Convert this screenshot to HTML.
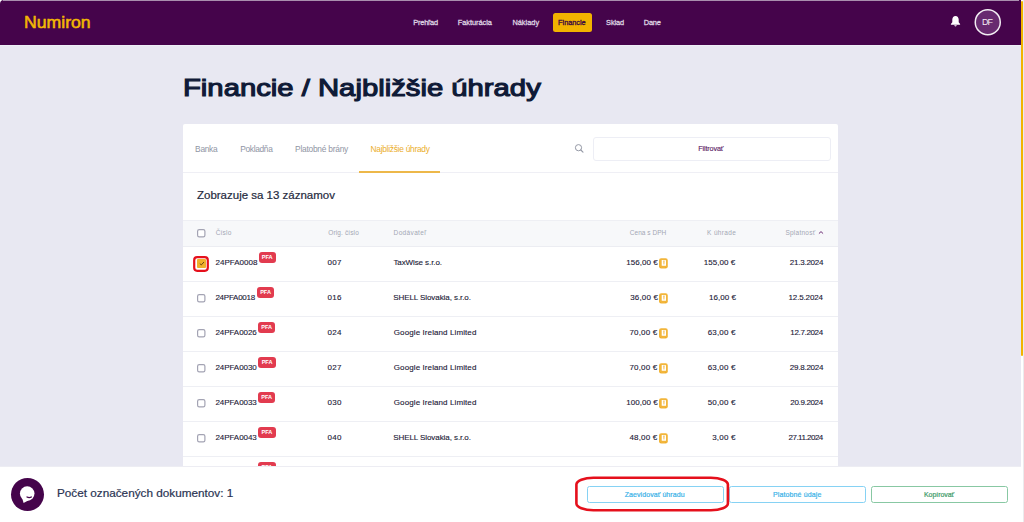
<!DOCTYPE html>
<html><head><meta charset="utf-8"><style>
html,body{margin:0;padding:0;width:1024px;height:522px;overflow:hidden;font-family:"Liberation Sans", sans-serif;}
body{position:relative;}
</style></head><body>
<div style="position:absolute;left:0.00px;top:0.00px;width:1024.00px;height:522.00px;background:#E8E8F2;"></div>
<div style="position:absolute;left:0.00px;top:0.00px;width:6.00px;height:6.00px;background:#FFFFFF;"></div>
<div style="position:absolute;left:1018.00px;top:0.00px;width:6.00px;height:6.00px;background:#F4F5F9;"></div>
<div style="position:absolute;left:0.00px;top:0.00px;width:1020.70px;height:44.50px;background:#45044B;border-top-left-radius:4px;"></div>
<div style="position:absolute;left:3.00px;top:0.00px;width:1016.00px;height:1.00px;background:#A98FAE;"></div>
<div style="position:absolute;left:0.00px;top:44.50px;width:1020.70px;height:1.30px;background:#EDEFF7;"></div>
<div style="position:absolute;left:24.10px;top:14.58px;font-size:16.80px;line-height:16.80px;color:#F2B704;font-weight:400;letter-spacing:0.000px;white-space:nowrap;-webkit-text-stroke:0.55px #F2B704;transform:scaleX(1.0512);transform-origin:0 0;">Numiron</div>
<div style="position:absolute;left:413.30px;top:19.23px;font-size:7.40px;line-height:7.40px;color:#DED2E1;font-weight:400;letter-spacing:-0.200px;white-space:nowrap;-webkit-text-stroke:0.3px #DED2E1;">Prehľad</div>
<div style="position:absolute;left:457.80px;top:19.23px;font-size:7.40px;line-height:7.40px;color:#DED2E1;font-weight:400;letter-spacing:-0.044px;white-space:nowrap;-webkit-text-stroke:0.3px #DED2E1;">Fakturácia</div>
<div style="position:absolute;left:512.40px;top:19.23px;font-size:7.40px;line-height:7.40px;color:#DED2E1;font-weight:400;letter-spacing:0.000px;white-space:nowrap;-webkit-text-stroke:0.3px #DED2E1;">Náklady</div>
<div style="position:absolute;left:606.10px;top:19.23px;font-size:7.40px;line-height:7.40px;color:#DED2E1;font-weight:400;letter-spacing:-0.100px;white-space:nowrap;-webkit-text-stroke:0.3px #DED2E1;">Sklad</div>
<div style="position:absolute;left:643.70px;top:19.23px;font-size:7.40px;line-height:7.40px;color:#DED2E1;font-weight:400;letter-spacing:-0.133px;white-space:nowrap;-webkit-text-stroke:0.3px #DED2E1;">Dane</div>
<div style="position:absolute;left:552.90px;top:13.10px;width:39.30px;height:18.60px;background:#F2B300;border-radius:2.5px;"></div>
<div style="position:absolute;left:558.10px;top:19.23px;font-size:7.40px;line-height:7.40px;color:#3A0840;font-weight:400;letter-spacing:-0.057px;white-space:nowrap;-webkit-text-stroke:0.3px #3A0840;">Financie</div>
<svg style="position:absolute;left:949.5px;top:15.3px" width="11" height="12" viewBox="0 0 11 12"><path d="M5.5 0.9c1.9 0 3.2 1.5 3.2 3.6v2.8l1.4 1.6v0.8H0.9V8.9l1.4-1.6V4.5c0-2.1 1.3-3.6 3.2-3.6z" fill="#fff"/><path d="M4.3 10.2h2.4c0 0.7-0.5 1.2-1.2 1.2s-1.2-0.5-1.2-1.2z" fill="#fff"/></svg>
<svg style="position:absolute;left:973px;top:7px" width="30" height="30" viewBox="0 0 30 30"><circle cx="14.76" cy="15.2" r="12.5" fill="#682B70" stroke="#F2EEF3" stroke-width="1.5"/></svg>
<div style="position:absolute;left:687.08px;width:600px;text-align:center;top:17.96px;font-size:8.90px;line-height:8.90px;color:#F4EEF5;font-weight:400;letter-spacing:-0.800px;white-space:nowrap;">DF</div>
<div style="position:absolute;left:1020.70px;top:0.00px;width:2.10px;height:522.00px;background:#FFFFFF;"></div>
<div style="position:absolute;left:1022.80px;top:0.00px;width:1.20px;height:522.00px;background:#EBEBED;"></div>
<div style="position:absolute;left:1020.70px;top:1.00px;width:2.40px;height:354.80px;background:#F2B300;border-radius:1.2px 1.2px 1.2px 1.2px;"></div>
<div style="position:absolute;left:182.50px;top:76.26px;font-size:24.50px;line-height:24.50px;color:#0F1A37;font-weight:400;letter-spacing:0.000px;white-space:nowrap;-webkit-text-stroke:1.15px #0F1A37;transform:scaleX(1.1942);transform-origin:0 0;">Financie / Najbližšie úhrady</div>
<div style="position:absolute;left:183.00px;top:123.60px;width:654.50px;height:398.40px;background:#FFFFFF;border-radius:2px;"></div>
<div style="position:absolute;left:195.10px;top:145.29px;font-size:8.40px;line-height:8.40px;color:#9095A4;font-weight:400;letter-spacing:-0.300px;white-space:nowrap;">Banka</div>
<div style="position:absolute;left:240.30px;top:145.29px;font-size:8.40px;line-height:8.40px;color:#9095A4;font-weight:400;letter-spacing:-0.343px;white-space:nowrap;">Pokladňa</div>
<div style="position:absolute;left:295.10px;top:145.29px;font-size:8.40px;line-height:8.40px;color:#9095A4;font-weight:400;letter-spacing:-0.246px;white-space:nowrap;">Platobné brány</div>
<div style="position:absolute;left:370.50px;top:145.29px;font-size:8.40px;line-height:8.40px;color:#EBAE2C;font-weight:400;letter-spacing:-0.275px;white-space:nowrap;">Najbližšie úhrady</div>
<div style="position:absolute;left:183.00px;top:172.00px;width:654.50px;height:1.00px;background:#EFEFF5;"></div>
<div style="position:absolute;left:359.10px;top:171.00px;width:80.90px;height:2.00px;background:#EDB84A;"></div>
<svg style="position:absolute;left:573.5px;top:143px" width="11" height="11" viewBox="0 0 11 11"><circle cx="4.5" cy="4.7" r="3.1" fill="none" stroke="#9498A5" stroke-width="1.0"/><path d="M6.8 7.0L9.0 9.2" stroke="#9498A5" stroke-width="1.1" stroke-linecap="round"/></svg>
<div style="position:absolute;left:593.2px;top:137.1px;width:235.4px;height:22px;border:1px solid #EDEEF5;border-radius:3px;background:#fff;"></div>
<div style="position:absolute;left:698.25px;top:144.72px;font-size:7.30px;line-height:7.30px;color:#5A2064;font-weight:400;letter-spacing:-0.175px;white-space:nowrap;-webkit-text-stroke:0.12px #5A2064;">Filtrovať</div>
<div style="position:absolute;left:196.80px;top:189.69px;font-size:11.00px;line-height:11.00px;color:#252A40;font-weight:400;letter-spacing:0.000px;white-space:nowrap;-webkit-text-stroke:0.2px #252A40;transform:scaleX(1.0443);transform-origin:0 0;">Zobrazuje sa 13 záznamov</div>
<div style="position:absolute;left:183.00px;top:219.80px;width:654.50px;height:27.10px;background:#F7F8FA;border-top:1px solid #EEEFF4;border-bottom:1px solid #ECEDF2;box-sizing:border-box;"></div>
<svg style="position:absolute;left:196.00px;top:228.10px" width="11" height="11" viewBox="0 0 11 11"><rect x="1.6" y="1.6" width="7.30" height="7.30" rx="1.6" fill="#fff" stroke="#A3A3B3" stroke-width="1.2"/></svg>
<div style="position:absolute;left:215.70px;top:229.90px;font-size:6.50px;line-height:6.50px;color:#A3A7B4;font-weight:400;letter-spacing:0.200px;white-space:nowrap;">Číslo</div>
<div style="position:absolute;left:328.30px;top:229.90px;font-size:6.50px;line-height:6.50px;color:#A3A7B4;font-weight:400;letter-spacing:0.120px;white-space:nowrap;">Orig. číslo</div>
<div style="position:absolute;left:393.60px;top:229.90px;font-size:6.50px;line-height:6.50px;color:#A3A7B4;font-weight:400;letter-spacing:0.350px;white-space:nowrap;">Dodávateľ</div>
<div style="position:absolute;right:357.70px;top:229.90px;font-size:6.50px;line-height:6.50px;color:#A3A7B4;font-weight:400;letter-spacing:0.044px;white-space:nowrap;">Cena s DPH</div>
<div style="position:absolute;right:287.80px;top:229.90px;font-size:6.50px;line-height:6.50px;color:#A3A7B4;font-weight:400;letter-spacing:0.343px;white-space:nowrap;">K úhrade</div>
<div style="position:absolute;right:208.60px;top:229.90px;font-size:6.50px;line-height:6.50px;color:#A3A7B4;font-weight:400;letter-spacing:0.250px;white-space:nowrap;">Splatnosť</div>
<svg style="position:absolute;left:818px;top:229.5px" width="6" height="5" viewBox="0 0 6 5"><path d="M1.2 3.3L3 1.6 4.8 3.3" fill="none" stroke="#6B2C73" stroke-width="1.0" stroke-linecap="round" stroke-linejoin="round"/></svg>
<div style="position:absolute;left:183.00px;top:280.90px;width:654.50px;height:1.00px;background:#EEEFF4;"></div>
<svg style="position:absolute;left:192px;top:254.80px" width="18" height="18" viewBox="0 0 18 18"><rect x="2.2" y="2.2" width="13.6" height="13.6" rx="3" fill="#fff" stroke="#E5101C" stroke-width="2.2"/></svg>
<div style="position:absolute;left:196.8px;top:258.70px;width:8.8px;height:9.3px;background:#F0B12B;border-radius:1px;"></div>
<svg style="position:absolute;left:198.5px;top:260.90px" width="6" height="5" viewBox="0 0 6 5"><path d="M0.8 2.6L2.3 3.9 5 1" fill="none" stroke="#5A3B10" stroke-width="0.9"/></svg>
<div style="position:absolute;left:215.60px;top:259.13px;font-size:8.00px;line-height:8.00px;color:#1C2037;font-weight:400;letter-spacing:0.000px;white-space:nowrap;-webkit-text-stroke:0.12px #1C2037;">24PFA0008</div>
<div style="position:absolute;left:258.50px;top:252.30px;width:17.4px;height:11px;background:#E23B4F;border-radius:3px;color:#fff;font-size:5.6px;line-height:11px;text-align:center;font-weight:700;">PFA</div>
<div style="position:absolute;left:327.40px;top:259.13px;font-size:8.00px;line-height:8.00px;color:#1C2037;font-weight:400;letter-spacing:0.400px;white-space:nowrap;-webkit-text-stroke:0.12px #1C2037;">007</div>
<div style="position:absolute;left:393.40px;top:259.13px;font-size:8.00px;line-height:8.00px;color:#1C2037;font-weight:400;letter-spacing:-0.092px;white-space:nowrap;-webkit-text-stroke:0.12px #1C2037;">TaxWise s.r.o.</div>
<div style="position:absolute;right:366.20px;top:259.13px;font-size:8.00px;line-height:8.00px;color:#1C2037;font-weight:400;letter-spacing:0.057px;white-space:nowrap;-webkit-text-stroke:0.12px #1C2037;">156,00 €</div>
<svg style="position:absolute;left:658.8px;top:257.90px" width="9" height="11" viewBox="0 0 9 11"><rect x="0" y="0.2" width="8.8" height="10.3" rx="2.2" fill="#F2B53A"/><rect x="2.7" y="2.0" width="4.3" height="5.8" rx="0.4" fill="#FFFFFF"/><path d="M4.35 2.6h1.2l-0.25 4.0h-0.7z" fill="#EFAE2A"/><rect x="1.3" y="8.9" width="0.8" height="0.8" rx="0.4" fill="#E59E10"/><rect x="6.0" y="8.9" width="0.8" height="0.8" rx="0.4" fill="#E59E10"/></svg>
<div style="position:absolute;right:288.70px;top:259.13px;font-size:8.00px;line-height:8.00px;color:#1C2037;font-weight:400;letter-spacing:0.057px;white-space:nowrap;-webkit-text-stroke:0.12px #1C2037;">155,00 €</div>
<div style="position:absolute;right:200.80px;top:259.13px;font-size:8.00px;line-height:8.00px;color:#1C2037;font-weight:400;letter-spacing:-0.250px;white-space:nowrap;-webkit-text-stroke:0.12px #1C2037;">21.3.2024</div>
<div style="position:absolute;left:183.00px;top:315.90px;width:654.50px;height:1.00px;background:#EEEFF4;"></div>
<svg style="position:absolute;left:195.90px;top:293.00px" width="11" height="11" viewBox="0 0 11 11"><rect x="1.6" y="1.6" width="7.30" height="7.30" rx="1.6" fill="#fff" stroke="#A3A3B3" stroke-width="1.2"/></svg>
<div style="position:absolute;left:215.40px;top:294.13px;font-size:8.00px;line-height:8.00px;color:#1C2037;font-weight:400;letter-spacing:-0.250px;white-space:nowrap;-webkit-text-stroke:0.12px #1C2037;">24PFA0018</div>
<div style="position:absolute;left:256.90px;top:287.30px;width:17.4px;height:11px;background:#E23B4F;border-radius:3px;color:#fff;font-size:5.6px;line-height:11px;text-align:center;font-weight:700;">PFA</div>
<div style="position:absolute;left:327.40px;top:294.13px;font-size:8.00px;line-height:8.00px;color:#1C2037;font-weight:400;letter-spacing:0.400px;white-space:nowrap;-webkit-text-stroke:0.12px #1C2037;">016</div>
<div style="position:absolute;left:393.20px;top:294.13px;font-size:8.00px;line-height:8.00px;color:#1C2037;font-weight:400;letter-spacing:-0.073px;white-space:nowrap;-webkit-text-stroke:0.12px #1C2037;">SHELL Slovakia, s.r.o.</div>
<div style="position:absolute;right:365.80px;top:294.13px;font-size:8.00px;line-height:8.00px;color:#1C2037;font-weight:400;letter-spacing:0.190px;white-space:nowrap;-webkit-text-stroke:0.12px #1C2037;">36,00 €</div>
<svg style="position:absolute;left:658.8px;top:292.90px" width="9" height="11" viewBox="0 0 9 11"><rect x="0" y="0.2" width="8.8" height="10.3" rx="2.2" fill="#F2B53A"/><rect x="2.7" y="2.0" width="4.3" height="5.8" rx="0.4" fill="#FFFFFF"/><path d="M4.35 2.6h1.2l-0.25 4.0h-0.7z" fill="#EFAE2A"/><rect x="1.3" y="8.9" width="0.8" height="0.8" rx="0.4" fill="#E59E10"/><rect x="6.0" y="8.9" width="0.8" height="0.8" rx="0.4" fill="#E59E10"/></svg>
<div style="position:absolute;right:287.90px;top:294.13px;font-size:8.00px;line-height:8.00px;color:#1C2037;font-weight:400;letter-spacing:0.057px;white-space:nowrap;-webkit-text-stroke:0.12px #1C2037;">16,00 €</div>
<div style="position:absolute;right:201.20px;top:294.13px;font-size:8.00px;line-height:8.00px;color:#1C2037;font-weight:400;letter-spacing:-0.150px;white-space:nowrap;-webkit-text-stroke:0.12px #1C2037;">12.5.2024</div>
<div style="position:absolute;left:183.00px;top:350.90px;width:654.50px;height:1.00px;background:#EEEFF4;"></div>
<svg style="position:absolute;left:195.90px;top:328.00px" width="11" height="11" viewBox="0 0 11 11"><rect x="1.6" y="1.6" width="7.30" height="7.30" rx="1.6" fill="#fff" stroke="#A3A3B3" stroke-width="1.2"/></svg>
<div style="position:absolute;left:215.40px;top:329.13px;font-size:8.00px;line-height:8.00px;color:#1C2037;font-weight:400;letter-spacing:-0.050px;white-space:nowrap;-webkit-text-stroke:0.12px #1C2037;">24PFA0026</div>
<div style="position:absolute;left:258.00px;top:322.30px;width:17.4px;height:11px;background:#E23B4F;border-radius:3px;color:#fff;font-size:5.6px;line-height:11px;text-align:center;font-weight:700;">PFA</div>
<div style="position:absolute;left:327.40px;top:329.13px;font-size:8.00px;line-height:8.00px;color:#1C2037;font-weight:400;letter-spacing:0.400px;white-space:nowrap;-webkit-text-stroke:0.12px #1C2037;">024</div>
<div style="position:absolute;left:393.80px;top:329.13px;font-size:8.00px;line-height:8.00px;color:#1C2037;font-weight:400;letter-spacing:0.098px;white-space:nowrap;-webkit-text-stroke:0.12px #1C2037;">Google Ireland Limited</div>
<div style="position:absolute;right:366.60px;top:329.13px;font-size:8.00px;line-height:8.00px;color:#1C2037;font-weight:400;letter-spacing:0.190px;white-space:nowrap;-webkit-text-stroke:0.12px #1C2037;">70,00 €</div>
<svg style="position:absolute;left:658.8px;top:327.90px" width="9" height="11" viewBox="0 0 9 11"><rect x="0" y="0.2" width="8.8" height="10.3" rx="2.2" fill="#F2B53A"/><rect x="2.7" y="2.0" width="4.3" height="5.8" rx="0.4" fill="#FFFFFF"/><path d="M4.35 2.6h1.2l-0.25 4.0h-0.7z" fill="#EFAE2A"/><rect x="1.3" y="8.9" width="0.8" height="0.8" rx="0.4" fill="#E59E10"/><rect x="6.0" y="8.9" width="0.8" height="0.8" rx="0.4" fill="#E59E10"/></svg>
<div style="position:absolute;right:288.30px;top:329.13px;font-size:8.00px;line-height:8.00px;color:#1C2037;font-weight:400;letter-spacing:0.190px;white-space:nowrap;-webkit-text-stroke:0.12px #1C2037;">63,00 €</div>
<div style="position:absolute;right:201.20px;top:329.13px;font-size:8.00px;line-height:8.00px;color:#1C2037;font-weight:400;letter-spacing:-0.350px;white-space:nowrap;-webkit-text-stroke:0.12px #1C2037;">12.7.2024</div>
<div style="position:absolute;left:183.00px;top:385.90px;width:654.50px;height:1.00px;background:#EEEFF4;"></div>
<svg style="position:absolute;left:195.90px;top:363.00px" width="11" height="11" viewBox="0 0 11 11"><rect x="1.6" y="1.6" width="7.30" height="7.30" rx="1.6" fill="#fff" stroke="#A3A3B3" stroke-width="1.2"/></svg>
<div style="position:absolute;left:215.40px;top:364.13px;font-size:8.00px;line-height:8.00px;color:#1C2037;font-weight:400;letter-spacing:-0.050px;white-space:nowrap;-webkit-text-stroke:0.12px #1C2037;">24PFA0030</div>
<div style="position:absolute;left:258.40px;top:357.30px;width:17.4px;height:11px;background:#E23B4F;border-radius:3px;color:#fff;font-size:5.6px;line-height:11px;text-align:center;font-weight:700;">PFA</div>
<div style="position:absolute;left:327.40px;top:364.13px;font-size:8.00px;line-height:8.00px;color:#1C2037;font-weight:400;letter-spacing:0.400px;white-space:nowrap;-webkit-text-stroke:0.12px #1C2037;">027</div>
<div style="position:absolute;left:393.80px;top:364.13px;font-size:8.00px;line-height:8.00px;color:#1C2037;font-weight:400;letter-spacing:0.098px;white-space:nowrap;-webkit-text-stroke:0.12px #1C2037;">Google Ireland Limited</div>
<div style="position:absolute;right:366.60px;top:364.13px;font-size:8.00px;line-height:8.00px;color:#1C2037;font-weight:400;letter-spacing:0.190px;white-space:nowrap;-webkit-text-stroke:0.12px #1C2037;">70,00 €</div>
<svg style="position:absolute;left:658.8px;top:362.90px" width="9" height="11" viewBox="0 0 9 11"><rect x="0" y="0.2" width="8.8" height="10.3" rx="2.2" fill="#F2B53A"/><rect x="2.7" y="2.0" width="4.3" height="5.8" rx="0.4" fill="#FFFFFF"/><path d="M4.35 2.6h1.2l-0.25 4.0h-0.7z" fill="#EFAE2A"/><rect x="1.3" y="8.9" width="0.8" height="0.8" rx="0.4" fill="#E59E10"/><rect x="6.0" y="8.9" width="0.8" height="0.8" rx="0.4" fill="#E59E10"/></svg>
<div style="position:absolute;right:288.30px;top:364.13px;font-size:8.00px;line-height:8.00px;color:#1C2037;font-weight:400;letter-spacing:0.190px;white-space:nowrap;-webkit-text-stroke:0.12px #1C2037;">63,00 €</div>
<div style="position:absolute;right:200.80px;top:364.13px;font-size:8.00px;line-height:8.00px;color:#1C2037;font-weight:400;letter-spacing:-0.250px;white-space:nowrap;-webkit-text-stroke:0.12px #1C2037;">29.8.2024</div>
<div style="position:absolute;left:183.00px;top:420.90px;width:654.50px;height:1.00px;background:#EEEFF4;"></div>
<svg style="position:absolute;left:195.90px;top:398.00px" width="11" height="11" viewBox="0 0 11 11"><rect x="1.6" y="1.6" width="7.30" height="7.30" rx="1.6" fill="#fff" stroke="#A3A3B3" stroke-width="1.2"/></svg>
<div style="position:absolute;left:215.40px;top:399.13px;font-size:8.00px;line-height:8.00px;color:#1C2037;font-weight:400;letter-spacing:-0.050px;white-space:nowrap;-webkit-text-stroke:0.12px #1C2037;">24PFA0033</div>
<div style="position:absolute;left:258.00px;top:392.30px;width:17.4px;height:11px;background:#E23B4F;border-radius:3px;color:#fff;font-size:5.6px;line-height:11px;text-align:center;font-weight:700;">PFA</div>
<div style="position:absolute;left:327.40px;top:399.13px;font-size:8.00px;line-height:8.00px;color:#1C2037;font-weight:400;letter-spacing:0.400px;white-space:nowrap;-webkit-text-stroke:0.12px #1C2037;">030</div>
<div style="position:absolute;left:393.80px;top:399.13px;font-size:8.00px;line-height:8.00px;color:#1C2037;font-weight:400;letter-spacing:0.098px;white-space:nowrap;-webkit-text-stroke:0.12px #1C2037;">Google Ireland Limited</div>
<div style="position:absolute;right:366.20px;top:399.13px;font-size:8.00px;line-height:8.00px;color:#1C2037;font-weight:400;letter-spacing:0.057px;white-space:nowrap;-webkit-text-stroke:0.12px #1C2037;">100,00 €</div>
<svg style="position:absolute;left:658.8px;top:397.90px" width="9" height="11" viewBox="0 0 9 11"><rect x="0" y="0.2" width="8.8" height="10.3" rx="2.2" fill="#F2B53A"/><rect x="2.7" y="2.0" width="4.3" height="5.8" rx="0.4" fill="#FFFFFF"/><path d="M4.35 2.6h1.2l-0.25 4.0h-0.7z" fill="#EFAE2A"/><rect x="1.3" y="8.9" width="0.8" height="0.8" rx="0.4" fill="#E59E10"/><rect x="6.0" y="8.9" width="0.8" height="0.8" rx="0.4" fill="#E59E10"/></svg>
<div style="position:absolute;right:288.30px;top:399.13px;font-size:8.00px;line-height:8.00px;color:#1C2037;font-weight:400;letter-spacing:0.190px;white-space:nowrap;-webkit-text-stroke:0.12px #1C2037;">50,00 €</div>
<div style="position:absolute;right:201.20px;top:399.13px;font-size:8.00px;line-height:8.00px;color:#1C2037;font-weight:400;letter-spacing:-0.350px;white-space:nowrap;-webkit-text-stroke:0.12px #1C2037;">20.9.2024</div>
<div style="position:absolute;left:183.00px;top:455.90px;width:654.50px;height:1.00px;background:#EEEFF4;"></div>
<svg style="position:absolute;left:195.90px;top:433.00px" width="11" height="11" viewBox="0 0 11 11"><rect x="1.6" y="1.6" width="7.30" height="7.30" rx="1.6" fill="#fff" stroke="#A3A3B3" stroke-width="1.2"/></svg>
<div style="position:absolute;left:215.40px;top:434.13px;font-size:8.00px;line-height:8.00px;color:#1C2037;font-weight:400;letter-spacing:-0.050px;white-space:nowrap;-webkit-text-stroke:0.12px #1C2037;">24PFA0043</div>
<div style="position:absolute;left:258.20px;top:427.30px;width:17.4px;height:11px;background:#E23B4F;border-radius:3px;color:#fff;font-size:5.6px;line-height:11px;text-align:center;font-weight:700;">PFA</div>
<div style="position:absolute;left:327.40px;top:434.13px;font-size:8.00px;line-height:8.00px;color:#1C2037;font-weight:400;letter-spacing:0.400px;white-space:nowrap;-webkit-text-stroke:0.12px #1C2037;">040</div>
<div style="position:absolute;left:393.20px;top:434.13px;font-size:8.00px;line-height:8.00px;color:#1C2037;font-weight:400;letter-spacing:-0.073px;white-space:nowrap;-webkit-text-stroke:0.12px #1C2037;">SHELL Slovakia, s.r.o.</div>
<div style="position:absolute;right:366.60px;top:434.13px;font-size:8.00px;line-height:8.00px;color:#1C2037;font-weight:400;letter-spacing:0.190px;white-space:nowrap;-webkit-text-stroke:0.12px #1C2037;">48,00 €</div>
<svg style="position:absolute;left:658.8px;top:432.90px" width="9" height="11" viewBox="0 0 9 11"><rect x="0" y="0.2" width="8.8" height="10.3" rx="2.2" fill="#F2B53A"/><rect x="2.7" y="2.0" width="4.3" height="5.8" rx="0.4" fill="#FFFFFF"/><path d="M4.35 2.6h1.2l-0.25 4.0h-0.7z" fill="#EFAE2A"/><rect x="1.3" y="8.9" width="0.8" height="0.8" rx="0.4" fill="#E59E10"/><rect x="6.0" y="8.9" width="0.8" height="0.8" rx="0.4" fill="#E59E10"/></svg>
<div style="position:absolute;right:288.30px;top:434.13px;font-size:8.00px;line-height:8.00px;color:#1C2037;font-weight:400;letter-spacing:0.217px;white-space:nowrap;-webkit-text-stroke:0.12px #1C2037;">3,00 €</div>
<div style="position:absolute;right:201.20px;top:434.13px;font-size:8.00px;line-height:8.00px;color:#1C2037;font-weight:400;letter-spacing:-0.517px;white-space:nowrap;-webkit-text-stroke:0.12px #1C2037;">27.11.2024</div>
<div style="position:absolute;left:183.00px;top:490.90px;width:654.50px;height:1.00px;background:#EEEFF4;"></div>
<svg style="position:absolute;left:195.90px;top:468.00px" width="11" height="11" viewBox="0 0 11 11"><rect x="1.6" y="1.6" width="7.30" height="7.30" rx="1.6" fill="#fff" stroke="#A3A3B3" stroke-width="1.2"/></svg>
<div style="position:absolute;left:215.60px;top:469.13px;font-size:8.00px;line-height:8.00px;color:#1C2037;font-weight:400;letter-spacing:0.000px;white-space:nowrap;-webkit-text-stroke:0.12px #1C2037;">24PFA0044</div>
<div style="position:absolute;left:258.20px;top:462.30px;width:17.4px;height:11px;background:#E23B4F;border-radius:3px;color:#fff;font-size:5.6px;line-height:11px;text-align:center;font-weight:700;">PFA</div>
<div style="position:absolute;left:327.40px;top:469.13px;font-size:8.00px;line-height:8.00px;color:#1C2037;font-weight:400;letter-spacing:0.400px;white-space:nowrap;-webkit-text-stroke:0.12px #1C2037;">041</div>
<div style="position:absolute;left:393.20px;top:469.13px;font-size:8.00px;line-height:8.00px;color:#1C2037;font-weight:400;letter-spacing:-0.073px;white-space:nowrap;-webkit-text-stroke:0.12px #1C2037;">SHELL Slovakia, s.r.o.</div>
<div style="position:absolute;right:366.20px;top:469.13px;font-size:8.00px;line-height:8.00px;color:#1C2037;font-weight:400;letter-spacing:0.057px;white-space:nowrap;-webkit-text-stroke:0.12px #1C2037;">12,00 €</div>
<svg style="position:absolute;left:658.8px;top:467.90px" width="9" height="11" viewBox="0 0 9 11"><rect x="0" y="0.2" width="8.8" height="10.3" rx="2.2" fill="#F2B53A"/><rect x="2.7" y="2.0" width="4.3" height="5.8" rx="0.4" fill="#FFFFFF"/><path d="M4.35 2.6h1.2l-0.25 4.0h-0.7z" fill="#EFAE2A"/><rect x="1.3" y="8.9" width="0.8" height="0.8" rx="0.4" fill="#E59E10"/><rect x="6.0" y="8.9" width="0.8" height="0.8" rx="0.4" fill="#E59E10"/></svg>
<div style="position:absolute;right:288.70px;top:469.13px;font-size:8.00px;line-height:8.00px;color:#1C2037;font-weight:400;letter-spacing:0.057px;white-space:nowrap;-webkit-text-stroke:0.12px #1C2037;">3,00 €</div>
<div style="position:absolute;right:200.80px;top:469.13px;font-size:8.00px;line-height:8.00px;color:#1C2037;font-weight:400;letter-spacing:-0.250px;white-space:nowrap;-webkit-text-stroke:0.12px #1C2037;">1.12.2024</div>
<div style="position:absolute;left:0.00px;top:466.10px;width:1022.80px;height:55.90px;background:#FFFFFF;"></div>
<div style="position:absolute;left:0.00px;top:466.10px;width:1020.70px;height:0.90px;background:#EDEDF3;"></div>
<div style="position:absolute;left:11px;top:478px;width:33px;height:33px;border-radius:50%;background:#45044B;"></div>
<svg style="position:absolute;left:18px;top:485px" width="18" height="19" viewBox="0 0 18 19"><circle cx="9.2" cy="8.6" r="7.3" fill="#fff"/><path d="M4.2 13.2L5.6 17.9 10.2 15.6z" fill="#fff"/><path d="M9.0 12.0q2.2 1.1 4.4 0" stroke="#45044B" stroke-width="1.3" fill="none" stroke-linecap="round"/></svg>
<div style="position:absolute;left:56.60px;top:488.26px;font-size:11.50px;line-height:11.50px;color:#2A3453;font-weight:400;letter-spacing:0.000px;white-space:nowrap;-webkit-text-stroke:0.2px #2A3453;transform:scaleX(1.0210);transform-origin:0 0;">Počet označených dokumentov: 1</div>
<div style="position:absolute;left:586.90px;top:485.9px;width:135.40px;height:14.9px;border:1px solid #86D2F4;border-radius:2.5px;background:#fff;"></div>
<div style="position:absolute;left:354.70px;width:600px;text-align:center;top:490.67px;font-size:7.00px;line-height:7.00px;color:#3AB2E8;font-weight:400;letter-spacing:0.075px;white-space:nowrap;-webkit-text-stroke:0.2px #3AB2E8;">Zaevidovať úhradu</div>
<div style="position:absolute;left:729.20px;top:485.9px;width:134.60px;height:14.9px;border:1px solid #86D2F4;border-radius:2.5px;background:#fff;"></div>
<div style="position:absolute;left:497.20px;width:600px;text-align:center;top:490.67px;font-size:7.00px;line-height:7.00px;color:#3AB2E8;font-weight:400;letter-spacing:0.123px;white-space:nowrap;-webkit-text-stroke:0.2px #3AB2E8;">Platobné údaje</div>
<div style="position:absolute;left:871.20px;top:485.9px;width:134.80px;height:14.9px;border:1px solid #88C8A3;border-radius:2.5px;background:#fff;"></div>
<div style="position:absolute;left:639.10px;width:600px;text-align:center;top:490.67px;font-size:7.00px;line-height:7.00px;color:#3D9A69;font-weight:400;letter-spacing:-0.050px;white-space:nowrap;-webkit-text-stroke:0.2px #3D9A69;">Kopírovať</div>
<svg style="position:absolute;left:573px;top:474px" width="160" height="40" viewBox="0 0 160 40"><path d="M20.4 3.7 H137.9 A17 6.8 0 0 1 154.9 10.5 V29.499999999999996 A17 6.8 0 0 1 137.9 36.3 H20.4 A17 6.8 0 0 1 3.4 29.499999999999996 V10.5 A17 6.8 0 0 1 20.4 3.7z" fill="none" stroke="#E5101C" stroke-width="2.6"/></svg>
</body></html>
